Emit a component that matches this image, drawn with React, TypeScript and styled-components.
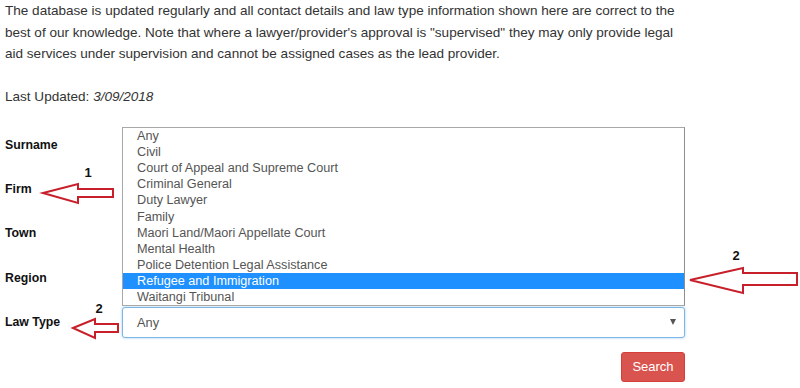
import React from 'react'
import styled, { createGlobalStyle } from 'styled-components'

const GlobalStyle = createGlobalStyle`
  html, body {
    margin: 0;
    padding: 0;
    background: #fff;
  }
  body {
    font-family: 'Liberation Sans', Arial, sans-serif;
    color: #333;
  }
`

const lawTypes = [
  'Any',
  'Civil',
  'Court of Appeal and Supreme Court',
  'Criminal General',
  'Duty Lawyer',
  'Family',
  'Maori Land/Maori Appellate Court',
  'Mental Health',
  'Police Detention Legal Assistance',
  'Refugee and Immigration',
  'Waitangi Tribunal',
]

const Page = styled.div`
  position: relative;
  width: 800px;
  height: 388px;
  padding: 0 5px;
  box-sizing: border-box;
  overflow: hidden;
`

const Intro = styled.p`
  max-width: 680px;
  margin: 0 0 21.5px;
  font-size: 13.55px;
  line-height: 21.5px;
  color: #333;
`

const Updated = styled.p`
  margin: 0 0 21.5px;
  font-size: 13.55px;
  line-height: 21.5px;
  color: #333;

  em {
    font-style: italic;
  }
`

const Form = styled.form`
  display: flex;
  flex-direction: column;
  gap: 13.4px;
  width: 680px;
`

const Row = styled.div`
  display: grid;
  grid-template-columns: 117px 563px;
  align-items: center;
  height: 31px;
`

const Label = styled.label`
  font-size: 12.3px;
  font-weight: bold;
  color: #111;
`

const Field = styled.div`
  position: relative;
  height: 31px;
`

const TextInput = styled.input`
  width: 100%;
  height: 31px;
  box-sizing: border-box;
  border: 1px solid #ccc;
  border-radius: 3px;
`

const SelectBox = styled.div<{ $focused?: boolean }>`
  display: flex;
  align-items: center;
  justify-content: space-between;
  height: 31px;
  box-sizing: border-box;
  padding: 0 8px 0 14px;
  border: 1px solid ${p => (p.$focused ? '#7db6e3' : '#ccc')};
  border-radius: 3px;
  box-shadow: ${p => (p.$focused ? '0 0 3px rgba(102, 175, 233, 0.6)' : 'none')};
  font-size: 12.8px;
  color: #555;
  background: #fff;
`

const Caret = styled.span`
  width: 0;
  height: 0;
  border-left: 3.5px solid transparent;
  border-right: 3.5px solid transparent;
  border-top: 6px solid #555;
`

const ListBox = styled.ul`
  position: absolute;
  left: 0;
  right: 0;
  bottom: calc(100% + 0.5px);
  margin: 0;
  padding: 0;
  list-style: none;
  background: #fff;
  border: 1px solid #a8a8a8;
  border-right-color: #8e8e8e;
  z-index: 2;
`

const Option = styled.li<{ $selected?: boolean }>`
  height: 16.1px;
  line-height: 16.1px;
  padding-left: 14px;
  font-size: 12.65px;
  color: ${p => (p.$selected ? '#fff' : '#555')};
  background: ${p => (p.$selected ? '#1e90ff' : 'transparent')};
  white-space: nowrap;
`

const Actions = styled.div`
  display: flex;
  justify-content: flex-end;
  padding-top: 0.6px;
`

const SearchButton = styled.button`
  width: 64px;
  height: 30px;
  border: 1px solid #d43f3a;
  border-radius: 3px;
  background: #d9534f;
  color: #fff;
  font-family: 'Liberation Sans', Arial, sans-serif;
  font-size: 13px;
  padding: 0;
`

const Annotations = styled.svg`
  position: absolute;
  left: 0;
  top: 0;
  pointer-events: none;
  z-index: 3;
`

const arrows = [
  '43,193 78,184 78,189 113,189 113,197 78,197 78,203',
  '73,328 95,319 95,324 118,324 118,332 95,332 95,338',
  '690,280 743,268 743,273 797,273 797,285 743,285 743,293',
]

const marks = [
  { x: 88, y: 177, t: '1' },
  { x: 99, y: 313, t: '2' },
  { x: 736, y: 260, t: '2' },
]

export default function App() {
  return (
    <>
      <GlobalStyle />
      <Page>
        <Intro>
          The database is updated regularly and all contact details and law type information shown here are correct to the
          best of our knowledge. Note that where a lawyer/provider's approval is "supervised" they may only provide legal
          aid services under supervision and cannot be assigned cases as the lead provider.
        </Intro>
        <Updated>
          Last Updated: <em>3/09/2018</em>
        </Updated>
        <Form onSubmit={e => e.preventDefault()}>
          {['Surname', 'Firm', 'Town', 'Region'].map(name => (
            <Row key={name}>
              <Label>{name}</Label>
              <Field>
                <TextInput />
              </Field>
            </Row>
          ))}
          <Row>
            <Label>Law Type</Label>
            <Field>
              <ListBox>
                {lawTypes.map(t => (
                  <Option key={t} $selected={t === 'Refugee and Immigration'}>
                    {t}
                  </Option>
                ))}
              </ListBox>
              <SelectBox $focused>
                <span>Any</span>
                <Caret />
              </SelectBox>
            </Field>
          </Row>
          <Actions>
            <SearchButton type="submit">Search</SearchButton>
          </Actions>
        </Form>
        <Annotations width="800" height="388" viewBox="0 0 800 388">
          {arrows.map(pts => (
            <polygon key={pts} points={pts} fill="none" stroke="#c8202a" strokeWidth="2" strokeLinejoin="miter" />
          ))}
          {marks.map(m => (
            <text
              key={m.x}
              x={m.x}
              y={m.y}
              textAnchor="middle"
              fontFamily="'Liberation Sans', Arial, sans-serif"
              fontWeight="bold"
              fontSize="13"
              fill="#111"
            >
              {m.t}
            </text>
          ))}
        </Annotations>
      </Page>
    </>
  )
}
